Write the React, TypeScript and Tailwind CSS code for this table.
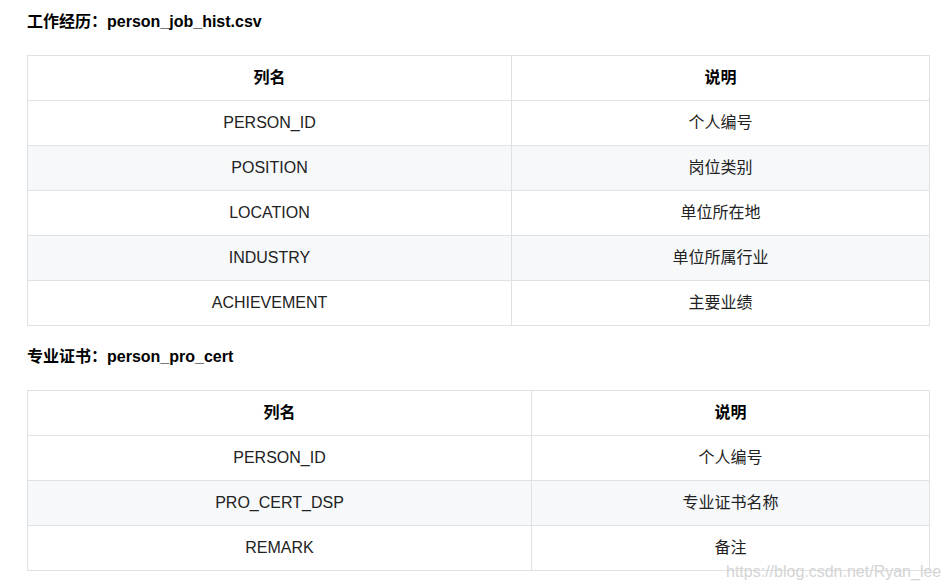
import React from "react";

const font = { fontFamily: '"Liberation Sans", Arial, "Noto Sans CJK SC", sans-serif' };

function Table({ rows, firstCol }: { rows: [string, string][]; firstCol: number }) {
  return (
    <table className="border-collapse w-[903px] table-fixed text-[16px] text-[#222]">
      <colgroup>
        <col style={{ width: firstCol }} />
        <col />
      </colgroup>
      <thead>
        <tr className="h-[45px] bg-white">
          <th className="border border-[#dfe2e5] font-bold text-black text-center">列名</th>
          <th className="border border-[#dfe2e5] font-bold text-black text-center">说明</th>
        </tr>
      </thead>
      <tbody>
        {rows.map((r, i) => (
          <tr key={i} className={"h-[45px] " + (i % 2 === 1 ? "bg-[#f6f8fa]" : "bg-white")}>
            <td className="border border-[#dfe2e5] text-center">{r[0]}</td>
            <td className="border border-[#dfe2e5] text-center">{r[1]}</td>
          </tr>
        ))}
      </tbody>
    </table>
  );
}

export default function App() {
  return (
    <div className="relative w-[948px] h-[588px] bg-white overflow-hidden" style={font}>
      <div className="pl-[27px] pt-[10px] flex flex-col">
        <div className="h-[24px] leading-[24px] text-[16px] font-bold text-black">工作经历：person_job_hist.csv</div>
        <div className="mt-[21px]">
          <Table
            firstCol={484}
            rows={[
              ["PERSON_ID", "个人编号"],
              ["POSITION", "岗位类别"],
              ["LOCATION", "单位所在地"],
              ["INDUSTRY", "单位所属行业"],
              ["ACHIEVEMENT", "主要业绩"],
            ]}
          />
        </div>
        <div className="mt-[19px] h-[24px] leading-[24px] text-[16px] font-bold text-black">专业证书：person_pro_cert</div>
        <div className="mt-[21px]">
          <Table
            firstCol={504}
            rows={[
              ["PERSON_ID", "个人编号"],
              ["PRO_CERT_DSP", "专业证书名称"],
              ["REMARK", "备注"],
            ]}
          />
        </div>
      </div>
      <div className="absolute left-[726px] top-[560px] text-[16px] text-[#d4d4d4] whitespace-nowrap">
        https://blog.csdn.net/Ryan_lee
      </div>
    </div>
  );
}
